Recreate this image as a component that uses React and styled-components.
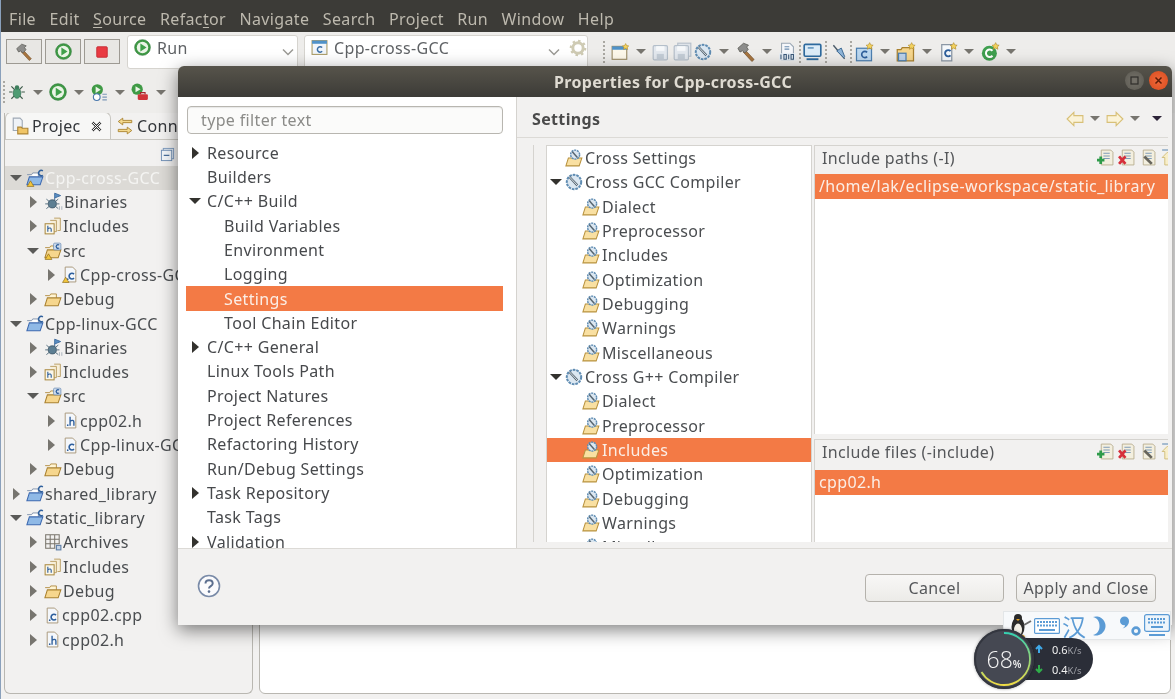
import React from 'react';
import styled, {createGlobalStyle} from 'styled-components';

const GlobalStyle = createGlobalStyle`
    html, body {
        margin: 0;
        padding: 0;
        background: #f2f1f0;
    }
    body {
        font-family: "Noto Sans", "Open Sans", sans-serif;
        font-size: 16px;
        letter-spacing: 0.35px;
        color: #4a4a4a;
    }
    * {
        box-sizing: border-box;
    }
`;

const Screen = styled.div`
    position: relative;
    width: 1175px;
    height: 699px;
    overflow: hidden;
    background: #f2f1f0;
    border-left: 1px solid #8aa0bb;
    display: flex;
    flex-direction: column;
    filter: blur(0.35px);
`;

const MenuBar = styled.nav`
    height: 32px;
    flex: none;
    background: #3c3b37;
    display: flex;
    align-items: flex-end;
    gap: 13.5px;
    padding: 0 0 2px 8px;
    color: #bdb9ae;
    line-height: 22px;
    u { text-underline-offset: 2px; }
`;

const ToolRow = styled.div`
    height: ${(p) => p.$height}px;
    flex: none;
    display: flex;
    align-items: center;
    padding-left: ${(p) => p.$pad}px;
    background: #eeedeb;
`;

const ToolButton = styled.div`
    width: 36px;
    height: 25px;
    margin-right: 3px;
    border: 1px solid #9d9a93;
    background: #e8e7e4;
    display: flex;
    align-items: center;
    justify-content: center;
`;

const Combo = styled.div`
    width: ${(p) => p.$width}px;
    height: 34px;
    margin-left: ${(p) => p.$left}px;
    background: #fff;
    border: 1px solid #d6d4cf;
    border-radius: 3px;
    display: flex;
    align-items: flex-start;
    gap: 6px;
    padding: 3px 0 0 6px;
    color: #5f6265;
`;

const ComboLabel = styled.span`
    flex: 1;
    line-height: 22px;
    margin-top: -2px;
`;

const ToolIcons = styled.div`
    display: flex;
    align-items: center;
    gap: ${(p) => p.$gap ?? 3}px;
    margin-left: ${(p) => p.$left || 0}px;
`;

const Gripper = styled.span`
    width: 2px;
    height: 22px;
    margin: 0 ${(p) => p.$space ?? 4}px;
    background: repeating-linear-gradient(to bottom, #aaa8a2 0 2px, transparent 2px 4px);
`;

const Drop = styled.span`
    width: 0;
    height: 0;
    flex: none;
    margin: 0 ${(p) => p.$space ?? 5}px;
    border-left: 5px solid transparent;
    border-right: 5px solid transparent;
    border-top: 5px solid ${(p) => p.$color || '#77756f'};
`;

const Main = styled.div`
    flex: 1;
    display: flex;
    gap: 6px;
    padding: 0 4px 5px 3px;
    min-height: 0;
`;

const ProjectPanel = styled.section`
    width: 249px;
    flex: none;
    display: flex;
    flex-direction: column;
    border: 1px solid #b9b7b1;
    border-top: none;
    border-radius: 0 0 6px 6px;
    overflow: hidden;
`;

const TabStrip = styled.div`
    height: 27px;
    flex: none;
    display: flex;
    align-items: flex-end;
    border-bottom: 1px solid #c9c7c1;
`;

const Tab = styled.div`
    width: ${(p) => p.$width}px;
    height: 27px;
    flex: none;
    display: flex;
    align-items: center;
    gap: 3px;
    padding-left: 5px;
    color: #33363a;
    background: ${(p) => (p.$active ? '#f7f7f6' : 'transparent')};
    border: ${(p) => (p.$active ? '1px solid #c9c7c1' : 'none')};
    border-bottom: none;
    border-radius: 6px 6px 0 0;
`;

const TabClose = styled.span`
    display: flex;
    margin-left: 6px;
`;

const PanelTools = styled.div`
    height: 25.5px;
    flex: none;
    display: flex;
    align-items: center;
    justify-content: flex-end;
    padding-right: 77px;
    padding-top: 4px;
`;

const TreeRows = styled.div`
    flex: 1;
    min-height: 0;
    overflow: hidden;
`;

const Row = styled.div`
    height: 24.32px;
    flex: none;
    display: flex;
    align-items: center;
    white-space: nowrap;
    overflow: hidden;
    padding-left: ${(p) => p.$indent}px;
    background: ${(p) => p.$bg || 'transparent'};
    color: ${(p) => p.$fg || '#4a4d50'};
`;

const RowLabel = styled.span`
    margin-left: ${(p) => p.$gap || 0}px;
`;

const Twisty = styled.span`
    width: 12px;
    flex: none;
    height: 12px;
    margin-right: ${(p) => p.$gap}px;
    display: inline-flex;
    align-items: center;
    justify-content: center;
    &::before {
        content: '';
        visibility: ${(p) => (p.$kind === 'none' ? 'hidden' : 'visible')};
        border-style: solid;
        border-color: transparent;
        ${(p) => (p.$kind === 'open'
            ? `border-width: 6px 6px 0 6px; border-top-color: ${p.$tone};`
            : `border-width: 6px 0 6px 7px; border-left-color: ${p.$tone};`)}
    }
`;

const EditorPanel = styled.section`
    flex: 1;
    margin-top: 3px;
    background: #fff;
    border: 1px solid #b9b7b1;
    border-radius: 0 0 6px 6px;
`;

const Dialog = styled.section`
    position: absolute;
    left: 177px;
    top: 66px;
    width: 994px;
    height: 559px;
    display: flex;
    flex-direction: column;
    border-radius: 6px 6px 0 0;
    background: #f2f1f0;
    box-shadow: 0 5px 18px rgba(0, 0, 0, 0.5);
    overflow: hidden;
`;

const TitleBar = styled.header`
    height: 31px;
    flex: none;
    position: relative;
    display: flex;
    align-items: center;
    justify-content: center;
    padding-right: 4px;
    background: linear-gradient(#57544b, #3c3b37);
    color: #dfdbd2;
    font-weight: 700;
`;

const WindowButtons = styled.div`
    position: absolute;
    right: 4px;
    top: 5px;
    display: flex;
    gap: 5px;
`;

const WindowButton = styled.span`
    width: 19px;
    height: 19px;
    border-radius: 50%;
    display: flex;
    align-items: center;
    justify-content: center;
    background: ${(p) => (p.$close ? 'radial-gradient(#f0683a, #d84c1e)' : 'radial-gradient(#75726a, #5c5a52)')};
    color: ${(p) => (p.$close ? '#5d1d08' : '#2f2e2a')};
`;

const DialogBody = styled.div`
    flex: 1;
    min-height: 0;
    display: flex;
    border-bottom: 1px solid #dcdad6;
`;

const Sidebar = styled.div`
    width: 339px;
    flex: none;
    background: #fff;
    border-right: 1px solid #d5d3cf;
    display: flex;
    flex-direction: column;
    padding: 9px 13px 0 8px;
    overflow: hidden;
`;

const FilterInput = styled.div`
    height: 28px;
    flex: none;
    margin: 0 0 6.5px 1px;
    border: 1px solid #b8b6b0;
    border-radius: 4px;
    background: #fbfbfa;
    box-shadow: inset 0 1px 1px rgba(0, 0, 0, 0.08);
    padding-left: 13px;
    line-height: 26px;
    color: #8b8b88;
`;

const PagePane = styled.div`
    flex: 1;
    min-width: 0;
    display: flex;
    flex-direction: column;
`;

const PageHeader = styled.div`
    height: 41px;
    flex: none;
    display: flex;
    align-items: center;
    justify-content: space-between;
    padding: 3px 0 0 15px;
    margin-right: 4px;
    border-bottom: 1px solid #dcdad6;
    font-weight: 700;
`;

const NavIcons = styled.div`
    display: flex;
    align-items: center;
`;

const PageContent = styled.div`
    flex: 1;
    min-height: 0;
    display: flex;
    padding: 7px 4px 6px 16px;
`;

const Gutter = styled.div`
    width: 13px;
    flex: none;
    border-left: 1px solid #d5d3cf;
`;

const SettingsTree = styled.div`
    width: 266px;
    flex: none;
    background: #fff;
    border: 1px solid #d5d3cf;
    border-bottom: none;
    overflow: hidden;
`;

const Lists = styled.div`
    flex: 1;
    min-width: 0;
    margin-left: 2px;
    display: flex;
    flex-direction: column;
    gap: 5px;
`;

const ListGroup = styled.div`
    flex: ${(p) => p.$grow};
    min-height: 0;
    display: flex;
    flex-direction: column;
    border-top: 1px solid #d5d3cf;
    border-left: 1px solid #d5d3cf;
`;

const ListHeader = styled.div`
    height: ${(p) => p.$height}px;
    flex: none;
    display: flex;
    align-items: center;
    justify-content: space-between;
    padding: 0 0 ${(p) => p.$height - 23}px 7px;
    color: #55575a;
`;

const ListBody = styled.div`
    flex: 1;
    background: #fff;
`;

const ListItem = styled.div`
    height: 25px;
    padding-left: 4px;
    line-height: 25px;
    background: #f37a45;
    color: #fbeee6;
    white-space: nowrap;
`;

const ListTools = styled.div`
    display: flex;
    align-items: center;
    gap: 4px;
    width: 71px;
    overflow: hidden;
`;

const Footer = styled.footer`
    height: 76px;
    flex: none;
    display: flex;
    align-items: flex-start;
    justify-content: space-between;
    padding: 25px 16px 0 19px;
`;

const FooterButtons = styled.div`
    display: flex;
    gap: 12px;
`;

const Button = styled.button`
    width: ${(p) => p.$width}px;
    height: 28px;
    padding: 0;
    font: inherit;
    letter-spacing: inherit;
    color: #55575a;
    border: 1px solid #b5b2ac;
    border-radius: 4px;
    background: linear-gradient(#f8f7f6, #ecebe8);
`;

const Tray = styled.div`
    position: absolute;
    left: 1002px;
    top: 611px;
    width: 168px;
    height: 29px;
    background: #f7f9fb;
    border: 1px solid #e3e6e8;
    display: flex;
    align-items: center;
    padding-left: 4px;
`;

const TraySlot = styled.span`
    display: flex;
    align-items: center;
    flex: none;
    margin-left: ${(p) => p.$left || 0}px;
`;

const TrayGlyph = styled.span`
    color: #5b9bd5;
    font-family: "Noto Sans CJK SC", sans-serif;
    font-size: 24px;
    line-height: 26px;
    letter-spacing: 0;
`;

const SpeedPill = styled.div`
    position: absolute;
    left: 1002px;
    top: 638px;
    width: 90px;
    height: 42px;
    padding-left: 31px;
    border-radius: 0 21px 21px 0;
    background: #2b2e38;
    display: flex;
    flex-direction: column;
    justify-content: center;
`;

const SpeedLine = styled.div`
    height: 20px;
    display: flex;
    align-items: center;
    gap: 8px;
    font-size: 11px;
    letter-spacing: 0;
    color: #f1f1f1;
    small {
        font-size: 9.5px;
        color: #9a9ca3;
    }
`;

const Gauge = styled.div`
    position: absolute;
    left: 973px;
    top: 629px;
    width: 60px;
    height: 60px;
    border-radius: 50%;
    background: #454852;
    box-shadow: 0 0 3px rgba(0, 0, 0, 0.4);
    display: flex;
    align-items: center;
    justify-content: center;
    color: #f4f4f4;
    font-size: 23px;
    letter-spacing: 0;
    font-family: "Open Sans", sans-serif;
    font-weight: 300;
    small {
        font-size: 10px;
        margin-top: 9px;
        font-weight: 600;
    }
    svg {
        position: absolute;
        inset: 0;
    }
`;

const ChevronSlot = styled.span`
    width: 18px;
    height: 26px;
    flex: none;
    display: flex;
    align-items: center;
    justify-content: center;
`;

const Chevron = () => (
    <ChevronSlot>
        <svg width="12" height="8" viewBox="0 0 12 8">
            <path d="M1 1.500l5 5 5-5" fill="none" stroke="#9b9a95" strokeWidth="1.500" />
        </svg>
    </ChevronSlot>
);

const Svg = ({size = 16, children}) => (
    <svg width={size} height={size} viewBox="0 0 16 16" style={{flex: 'none'}}>{children}</svg>
);

const Hammer = ({size = 18}) => (
    <Svg size={size}>
        <path d="M7.5 6.5l7 7.5-1.8 1.6-7-7.6z" fill="#a8753f" stroke="#6e4a24" strokeWidth=".5" />
        <path d="M1.5 5L6 1l4 1.5L8.5 4 9.8 6 7 8.8 5.2 7 3.2 8z" fill="#8d8d8b" stroke="#55554f" strokeWidth=".6" />
    </Svg>
);

const RunDot = ({size = 17}) => (
    <Svg size={size}>
        <circle cx="8" cy="8" r="7.4" fill="#3f9a45" stroke="#2c7a38" strokeWidth=".6" />
        <circle cx="8" cy="8" r="5.4" fill="#eaf4e6" />
        <path d="M6 4.3L11.8 8 6 11.7z" fill="#3fa04a" />
    </Svg>
);

const StopSquare = () => (
    <Svg size={14}>
        <rect x="2" y="2" width="12" height="12" rx="1" fill="#e93a42" stroke="#c22a32" />
    </Svg>
);

const ConfigC = () => (
    <Svg size={17}>
        <rect x="1" y="1.5" width="14" height="13" fill="#f1f6fb" stroke="#a99a63" />
        <rect x="1" y="1.5" width="14" height="3" fill="#4f92c9" />
        <path d="M10.5 8a2.6 2.6 0 1 0 0 3.6" fill="none" stroke="#3a6ea5" strokeWidth="1.4" />
    </Svg>
);

const Gear = () => (
    <Svg size={18}>
        <circle cx="8" cy="8" r="4.6" fill="none" stroke="#cfcbb4" strokeWidth="2.6" />
        <circle cx="8" cy="8" r="6.4" fill="none" stroke="#cfcbb4" strokeWidth="2" strokeDasharray="2.2 2.8" />
    </Svg>
);

const Bug = () => (
    <Svg size={18}>
        <path d="M3 3l3 3M13 3l-3 3M1 8h3M15 8h-3M3 14l3-3M13 14l-3-3" stroke="#3e5c4a" strokeWidth="1" />
        <ellipse cx="8" cy="9" rx="3.4" ry="4.6" fill="#4f9c73" stroke="#2f6a4f" strokeWidth=".6" />
        <circle cx="8" cy="4" r="2" fill="#3d7e5c" />
    </Svg>
);

const RunHistory = () => (
    <Svg size={18}>
        <circle cx="6.5" cy="6" r="5" fill="#3f9a45" />
        <path d="M5 3.2L9.5 6 5 8.8z" fill="#eaf4e6" />
        <circle cx="6" cy="12.5" r="3" fill="#fff" stroke="#4a78ad" />
        <path d="M11 10h4M11 12.5h4M11 15h4" stroke="#7c98b8" />
    </Svg>
);

const RunTool = () => (
    <Svg size={18}>
        <circle cx="5.5" cy="5.5" r="5" fill="#3f9a45" />
        <path d="M4 2.8L8.5 5.5 4 8.2z" fill="#eaf4e6" />
        <rect x="6" y="10" width="9" height="5" rx="1" fill="#d0343a" />
        <path d="M8.5 10V8.5h4V10" fill="none" stroke="#a3262b" />
    </Svg>
);

const CollapseAll = () => (
    <Svg size={15}>
        <rect x="3.5" y="1.5" width="11" height="11" fill="#e6edf5" stroke="#7f9cbf" />
        <rect x="1.5" y="3.5" width="11" height="11" fill="#f2f6fa" stroke="#6f8fb5" />
        <path d="M4 9h6" stroke="#4a6f9c" strokeWidth="1.4" />
    </Svg>
);

const ProjectTabIcon = () => (
    <Svg size={18}>
        <path d="M2 1h6l2 2v9H2z" fill="#eef2f7" stroke="#9fa9b5" />
        <path d="M6 9h3l1 1h5v5H6z" fill="#f0c566" stroke="#ad8536" />
    </Svg>
);

const ConnTabIcon = () => (
    <Svg size={18}>
        <path d="M6 1L2 4l4 3V5h8V3H6zM10 9l4 3-4 3v-2H2v-2h8z" fill="#f3d98f" stroke="#a9822f" strokeWidth=".8" />
    </Svg>
);

const CloseMark = () => (
    <Svg size={13}>
        <path d="M3 3l10 10M13 3L3 13" stroke="#333" strokeWidth="3" />
        <path d="M3 3l10 10M13 3L3 13" stroke="#fff" strokeWidth="1.2" />
    </Svg>
);

const FolderShape = () => (
    <>
        <path d="M1 5h4l1-1.5h5V7" fill="#fff4d2" stroke="#b08a3e" strokeWidth=".8" />
        <path d="M.8 14L3 7h12l-2.4 7z" fill="#f6d68d" stroke="#a9812f" strokeWidth=".9" />
    </>
);

const Folder = () => (
    <Svg size={18}>
        <FolderShape />
    </Svg>
);

const ProjectFolder = ({warn}) => (
    <Svg size={18}>
        <path d="M1 5h4l1-1.5h5V7" fill="#fff" stroke="#7a8da8" strokeWidth=".8" />
        <path d="M.8 14L3 7h12l-2.4 7z" fill="#8fb9e6" stroke="#3d69b0" strokeWidth=".9" />
        <path d="M15 1.6a2.4 2.4 0 1 0 0 4" fill="none" stroke="#2e5f9c" strokeWidth="1.4" />
        {warn && <path d="M1 15.5l3-5 3 5z" fill="#f2c53d" stroke="#8a6a18" strokeWidth=".6" />}
    </Svg>
);

const SourceFolder = ({warn}) => (
    <Svg size={18}>
        <FolderShape />
        <rect x="8.5" y="1" width="6.5" height="6" rx="1" fill="#cfdcec" stroke="#6e8fb8" strokeWidth=".7" />
        <path d="M13.5 2.8a1.6 1.6 0 1 0 0 2.4" fill="none" stroke="#2e5f9c" strokeWidth="1.1" />
        {warn && <path d="M1 15.5l3-5 3 5z" fill="#f2c53d" stroke="#8a6a18" strokeWidth=".6" />}
    </Svg>
);

const BinaryIcon = () => (
    <Svg size={19}>
        <path d="M9 1v6M9 1l5 2-5 2" fill="#5b8fc4" stroke="#3f6d9e" strokeWidth=".8" />
        <circle cx="7" cy="10" r="3.4" fill="#5d7f93" stroke="#3b5566" strokeWidth=".7" />
        <path d="M2 6l2.5 2M2 14l2.5-2M12 6L9.5 8M12 14l-2.5-2M1 10h2.5M13 10h-2.5" stroke="#556f80" strokeWidth=".8" />
        <path d="M13 12v3M15 12v3" stroke="#a9b3bd" strokeWidth=".8" />
    </Svg>
);

const IncludesIcon = () => (
    <Svg size={18}>
        <path d="M9 1h5.5v11H12" fill="#f7efd9" stroke="#b79a5c" strokeWidth=".8" />
        <path d="M5.5 3H11v10H9" fill="#f7efd9" stroke="#b79a5c" strokeWidth=".8" />
        <rect x="1" y="6" width="8" height="9" fill="#fbf7ea" stroke="#a9883e" strokeWidth=".9" />
        <path d="M3.4 7.8v5.4M3.4 10.5c1.8-1.4 3-.6 3 .7v2" fill="none" stroke="#2e5f9c" strokeWidth="1" />
    </Svg>
);

const SourceFile = ({kind = 'c', warn}) => (
    <Svg size={17}>
        <path d="M3 1h7l3 3v11H3z" fill="#f4f7fb" stroke="#a9977a" strokeWidth=".9" />
        <circle cx="5.4" cy="12.4" r=".8" fill="#2e5f9c" />
        {kind === 'c'
            ? <path d="M11.3 7.6a2.7 2.7 0 1 0 0 3.8" fill="none" stroke="#2e5f9c" strokeWidth="1.5" />
            : <path d="M7.6 4.5v8.5M7.6 8.8c2-1.7 3.6-.9 3.6.8V13" fill="none" stroke="#2e5f9c" strokeWidth="1.3" />}
        {warn && <path d="M.5 15.5l3-5 3 5z" fill="#f2c53d" stroke="#8a6a18" strokeWidth=".6" />}
    </Svg>
);

const ArchiveIcon = () => (
    <Svg size={18}>
        <path d="M1 1.5h13M1 5.5h13M1 9.5h13M1 13.5h9M1.5 1v13M5.5 1v13M9.5 1v13M13.5 1v9" stroke="#77736a" strokeWidth=".9" />
        <rect x="11" y="11" width="4" height="4" fill="#c7d5e6" stroke="#5f7fa6" />
    </Svg>
);

const Wheel = ({size = 18}) => (
    <Svg size={size}>
        <circle cx="8" cy="8" r="6.4" fill="#dbe7f1" stroke="#5f8cb2" strokeWidth="1.8" strokeDasharray="2.4 .8" />
        <path d="M4 3.5L11 11" stroke="#55646f" strokeWidth="2" />
        <path d="M4 3.5L11 11" stroke="#e5edf3" strokeWidth=".8" />
    </Svg>
);

const ToolFolder = () => (
    <Svg size={18}>
        <path d="M.8 15L3 8h12l-2.400 7z" fill="#f9e0a2" stroke="#b8923f" strokeWidth=".9" />
        <circle cx="9" cy="5" r="4" fill="#dbe7f1" stroke="#5f8cb2" strokeWidth="1.3" strokeDasharray="1.8 .7" />
        <path d="M6.500 2.500L11 7.500" stroke="#55646f" strokeWidth="1.300" />
    </Svg>
);

const NewWindow = () => (
    <Svg size={18}>
        <rect x="1" y="3" width="13" height="11.5" fill="#fdf8ea" stroke="#9c8d66" />
        <rect x="1" y="3" width="13" height="3" fill="#4f92c9" />
        <path d="M13 .5l.9 1.8 1.9.3-1.4 1.3.4 1.9-1.8-1-1.8 1 .4-1.9-1.4-1.3 1.9-.3z" fill="#f4d35e" stroke="#b08a25" strokeWidth=".5" />
    </Svg>
);

const SaveDisk = ({ghost}) => (
    <Svg size={19}>
        {ghost && <rect x="4" y="1" width="11" height="11" fill="#dfe4ea" stroke="#b8c1cb" />}
        <rect x="1" y="3" width="12" height="12" rx="1" fill="#e3e8ee" stroke="#b4bfca" />
        <rect x="3.5" y="3.5" width="7" height="4" fill="#f6f8fa" />
        <rect x="4" y="10" width="6" height="5" fill="#c3ccd6" />
    </Svg>
);

const BinaryFile = () => (
    <Svg size={19}>
        <path d="M3 1h7l3 3v11H3z" fill="#f5f7fa" stroke="#9aa7b4" strokeWidth=".9" />
        <rect x="1" y="9.5" width="14" height="6" fill="#e6edf4" />
        <path d="M2.5 10.5v4M5 10.5h2v4H5zM9 10.5v4M11 10.5h2v4h-2z" fill="none" stroke="#3a5878" strokeWidth=".9" />
        <path d="M5.5 4h4M5.5 6h4" stroke="#6a8cae" />
    </Svg>
);

const Monitor = () => (
    <Svg size={19}>
        <rect x="1" y="2" width="14" height="10" rx="1" fill="#dcecf8" stroke="#2e6a9e" strokeWidth="1.4" />
        <path d="M4 5h5" stroke="#3a78aa" />
        <path d="M3 14.5h10" stroke="#2e6a9e" strokeWidth="1.6" />
    </Svg>
);

const Pin = () => (
    <Svg size={18}>
        <path d="M3 2l10 12" stroke="#4b5a68" strokeWidth="1.2" />
        <path d="M6 7l4-2.5 3 7.5-1 1z" fill="#8fb5d8" stroke="#36638e" strokeWidth=".8" />
    </Svg>
);

const NewFolderC = ({tone}) => (
    <Svg size={20}>
        <rect x="2" y="5" width="12" height="10" fill={tone} stroke="#4d7fb0" />
        <path d="M10.5 8.3a2.5 2.5 0 1 0 0 3.4" fill="none" stroke="#2e5f9c" strokeWidth="1.3" />
        <path d="M12.5 .5l.9 1.8 1.9.3-1.4 1.3.4 1.9-1.8-1-1.8 1 .4-1.9-1.4-1.3 1.9-.3z" fill="#f4d35e" stroke="#b08a25" strokeWidth=".5" />
    </Svg>
);

const NewFolderYellow = () => (
    <Svg size={20}>
        <path d="M1 15V6h3l1-1.5h9V15z" fill="#f6d68d" stroke="#a9812f" />
        <rect x="2" y="9" width="6" height="6" fill="#bcd2ea" stroke="#4d7fb0" />
        <path d="M12.5 .5l.9 1.8 1.9.3-1.4 1.3.4 1.9-1.8-1-1.8 1 .4-1.9-1.4-1.3 1.9-.3z" fill="#f4d35e" stroke="#b08a25" strokeWidth=".5" />
    </Svg>
);

const NewFile = () => (
    <Svg size={20}>
        <path d="M3 2h8v13H3z" fill="#f5f8fb" stroke="#8b97a5" />
        <path d="M10 7.3a2.5 2.5 0 1 0 0 3.4" fill="none" stroke="#2e5f9c" strokeWidth="1.5" />
        <path d="M12.5 .5l.9 1.8 1.9.3-1.4 1.3.4 1.9-1.8-1-1.8 1 .4-1.9-1.4-1.3 1.9-.3z" fill="#f4d35e" stroke="#b08a25" strokeWidth=".5" />
    </Svg>
);

const NewClass = () => (
    <Svg size={20}>
        <circle cx="7.5" cy="9" r="6" fill="#3f9f4f" />
        <path d="M10 7a3 3 0 1 0 0 4" fill="none" stroke="#fff" strokeWidth="1.6" />
        <path d="M12.5 .5l.9 1.8 1.9.3-1.4 1.3.4 1.9-1.8-1-1.8 1 .4-1.9-1.4-1.3 1.9-.3z" fill="#f4d35e" stroke="#b08a25" strokeWidth=".5" />
    </Svg>
);

const NavArrow = ({left}) => (
    <Svg size={18}>
        <path
            d={left ? 'M1 8l6-6v3h8v6H7v3z' : 'M15 8L9 2v3H1v6h8v3z'}
            fill="#fbf3d8"
            stroke="#d8c078"
        />
    </Svg>
);

const HelpIcon = () => (
    <svg width="24" height="24" viewBox="0 0 24 24">
        <circle cx="12" cy="12" r="10.5" fill="#fbfbfd" stroke="#7a8ba8" strokeWidth="1.6" />
        <path d="M8.5 9.5c0-4.4 7.2-4.4 7.2 0 0 2.7-3.7 2.6-3.7 5" fill="none" stroke="#5c6f8f" strokeWidth="2" />
        <circle cx="12" cy="17.6" r="1.3" fill="#5c6f8f" />
    </svg>
);

const PageAction = ({mark}) => (
    <Svg size={17}>
        <path d="M4 1h9l2 2v12H4z" fill="#f3efdf" stroke="#b3a98a" strokeWidth=".8" />
        <path d="M6 4h6M6 6.5h6M6 9h6" stroke="#7f9bb8" />
        {mark === 'add' && <path d="M3.5 7v7M0 10.5h7" stroke="#2f9b4a" strokeWidth="2.6" />}
        {mark === 'del' && <path d="M1 7l6 7M7 7l-6 7" stroke="#d62f3a" strokeWidth="2.6" />}
        {mark === 'edit' && <path d="M5 7l7 7" stroke="#67655c" strokeWidth="2.6" />}
    </Svg>
);

const UpArrowAction = () => (
    <Svg size={17}>
        <path d="M2 1h10" stroke="#8ba9c6" strokeWidth="1.4" />
        <path d="M7 3l5 5H9.5v7h-5V8H2z" fill="#f8eec9" stroke="#cdb873" strokeWidth=".8" />
    </Svg>
);

const Penguin = () => (
    <svg width="24" height="28" viewBox="0 0 24 28">
        <ellipse cx="10" cy="15" rx="6.500" ry="10" fill="#2b2b2b" />
        <ellipse cx="10" cy="18" rx="4" ry="6.500" fill="#f2efe6" />
        <circle cx="10" cy="6" r="4" fill="#2b2b2b" />
        <path d="M8 7h4l-2 2z" fill="#e6a324" />
        <path d="M3 25c2-3 5-3 6 0zM11 25c2-3 5-3 6 0z" fill="#e6a324" />
        <path d="M16 13l7-4" stroke="#6a6a6a" strokeWidth="2" />
    </svg>
);

const KeyboardFlat = () => (
    <svg width="26" height="16" viewBox="0 0 26 16">
        <rect x=".6" y=".6" width="24.8" height="14.8" rx="1" fill="#fff" stroke="#5b9bd5" strokeWidth="1.2" />
        <path d="M3 4h20M3 7.5h20" stroke="#5b9bd5" strokeWidth="2" strokeDasharray="2 1" />
        <path d="M5 12h16" stroke="#5b9bd5" strokeWidth="2" />
    </svg>
);

const Moon = () => (
    <svg width="22" height="22" viewBox="0 0 22 22">
        <path d="M2 2a9.500 9.500 0 1 1 0 18c4.500-1 6.500-4.500 6.500-9S6.500 3 2 2z" fill="#5b9bd5" />
    </svg>
);

const PunctDots = () => (
    <svg width="24" height="22" viewBox="0 0 24 22">
        <path d="M2 6a4.500 4.500 0 1 1 9 0c0 4-3 6.500-6.500 7.500C6.500 12 7 11 7 10.200 4 10.500 2 8.500 2 6z" fill="#5b9bd5" />
        <circle cx="18" cy="16" r="3.400" fill="none" stroke="#5b9bd5" strokeWidth="2.600" />
    </svg>
);

const KeyboardStand = () => (
    <svg width="26" height="23" viewBox="0 0 26 23">
        <rect x=".6" y=".6" width="24.800" height="16.800" rx="2" fill="#eef5fb" stroke="#5b9bd5" strokeWidth="1.200" />
        <path d="M4 5h18M4 8.500h18" stroke="#5b9bd5" strokeWidth="2" strokeDasharray="2 1" />
        <path d="M7 13h12M5 21h16" stroke="#5b9bd5" strokeWidth="2" />
    </svg>
);

const GaugeRing = () => (
    <svg width="60" height="60" viewBox="0 0 60 60">
        <defs>
            <linearGradient id="ringTone" x1="0" y1="0" x2="0" y2="1">
                <stop offset="0" stopColor="#35d0b0" />
                <stop offset="1" stopColor="#f0dc45" />
            </linearGradient>
        </defs>
        <circle cx="30" cy="30" r="29" fill="none" stroke="#33363f" strokeWidth="2" />
        <path d="M30 4a26 26 0 0 1 0 52A26 26 0 0 1 7.500 43" fill="none" stroke="url(#ringTone)" strokeWidth="1.800" />
    </svg>
);

const Arrow = ({color, up}) => (
    <svg width="10" height="10" viewBox="0 0 10 10">
        <path d={up ? 'M5 9V3M2 5l3-3 3 3' : 'M5 1v6M2 5l3 3 3-3'} fill="none" stroke={color} strokeWidth="2" />
    </svg>
);

const iconFor = {
    project: <ProjectFolder />,
    projectWarn: <ProjectFolder warn />,
    binary: <BinaryIcon />,
    includes: <IncludesIcon />,
    src: <SourceFolder />,
    srcWarn: <SourceFolder warn />,
    fileC: <SourceFile />,
    fileCWarn: <SourceFile warn />,
    fileH: <SourceFile kind="h" />,
    folder: <Folder />,
    archive: <ArchiveIcon />,
    wheel: <Wheel />,
    tool: <ToolFolder />,
};

const projectTree = [
    {d: 0, t: 'open', i: 'projectWarn', label: 'Cpp-cross-GCC', selected: true},
    {d: 1, t: 'closed', i: 'binary', label: 'Binaries'},
    {d: 1, t: 'closed', i: 'includes', label: 'Includes'},
    {d: 1, t: 'open', i: 'srcWarn', label: 'src'},
    {d: 2, t: 'closed', i: 'fileCWarn', label: 'Cpp-cross-GCC.c'},
    {d: 1, t: 'closed', i: 'folder', label: 'Debug'},
    {d: 0, t: 'open', i: 'project', label: 'Cpp-linux-GCC'},
    {d: 1, t: 'closed', i: 'binary', label: 'Binaries'},
    {d: 1, t: 'closed', i: 'includes', label: 'Includes'},
    {d: 1, t: 'open', i: 'src', label: 'src'},
    {d: 2, t: 'closed', i: 'fileH', label: 'cpp02.h'},
    {d: 2, t: 'closed', i: 'fileC', label: 'Cpp-linux-GCC.c'},
    {d: 1, t: 'closed', i: 'folder', label: 'Debug'},
    {d: 0, t: 'closed', i: 'project', label: 'shared_library'},
    {d: 0, t: 'open', i: 'project', label: 'static_library'},
    {d: 1, t: 'closed', i: 'archive', label: 'Archives'},
    {d: 1, t: 'closed', i: 'includes', label: 'Includes'},
    {d: 1, t: 'closed', i: 'folder', label: 'Debug'},
    {d: 1, t: 'closed', i: 'fileC', label: 'cpp02.cpp'},
    {d: 1, t: 'closed', i: 'fileH', label: 'cpp02.h'},
];

const propertyPages = [
    {d: 0, t: 'closed', label: 'Resource'},
    {d: 0, t: 'none', label: 'Builders'},
    {d: 0, t: 'open', label: 'C/C++ Build'},
    {d: 1, t: 'none', label: 'Build Variables'},
    {d: 1, t: 'none', label: 'Environment'},
    {d: 1, t: 'none', label: 'Logging'},
    {d: 1, t: 'none', label: 'Settings', selected: true},
    {d: 1, t: 'none', label: 'Tool Chain Editor'},
    {d: 0, t: 'closed', label: 'C/C++ General'},
    {d: 0, t: 'none', label: 'Linux Tools Path'},
    {d: 0, t: 'none', label: 'Project Natures'},
    {d: 0, t: 'none', label: 'Project References'},
    {d: 0, t: 'none', label: 'Refactoring History'},
    {d: 0, t: 'none', label: 'Run/Debug Settings'},
    {d: 0, t: 'closed', label: 'Task Repository'},
    {d: 0, t: 'none', label: 'Task Tags'},
    {d: 0, t: 'closed', label: 'Validation'},
];

const settingsTree = [
    {d: 0, t: 'none', i: 'tool', label: 'Cross Settings'},
    {d: 0, t: 'open', i: 'wheel', label: 'Cross GCC Compiler'},
    {d: 1, i: 'tool', label: 'Dialect'},
    {d: 1, i: 'tool', label: 'Preprocessor'},
    {d: 1, i: 'tool', label: 'Includes'},
    {d: 1, i: 'tool', label: 'Optimization'},
    {d: 1, i: 'tool', label: 'Debugging'},
    {d: 1, i: 'tool', label: 'Warnings'},
    {d: 1, i: 'tool', label: 'Miscellaneous'},
    {d: 0, t: 'open', i: 'wheel', label: 'Cross G++ Compiler'},
    {d: 1, i: 'tool', label: 'Dialect'},
    {d: 1, i: 'tool', label: 'Preprocessor'},
    {d: 1, i: 'tool', label: 'Includes', selected: true},
    {d: 1, i: 'tool', label: 'Optimization'},
    {d: 1, i: 'tool', label: 'Debugging'},
    {d: 1, i: 'tool', label: 'Warnings'},
    {d: 1, i: 'tool', label: 'Miscellaneous'},
];

const menus = ['File', 'Edit', <><u>S</u>ource</>, <>Refac<u>t</u>or</>, 'Navigate', 'Search', 'Project', 'Run', 'Window', 'Help'];

function ListActions() {
    return (
        <ListTools>
            <PageAction mark="add" />
            <PageAction mark="del" />
            <PageAction mark="edit" />
            <UpArrowAction />
        </ListTools>
    );
}

export default function App() {
    return (
        <Screen>
            <GlobalStyle />
            <MenuBar>
                {menus.map((menu, index) => <span key={index}>{menu}</span>)}
            </MenuBar>
            <ToolRow $height={39} $pad={5}>
                <ToolButton><Hammer /></ToolButton>
                <ToolButton><RunDot /></ToolButton>
                <ToolButton><StopSquare /></ToolButton>
                <Combo $width={171} $left={4}>
                    <RunDot />
                    <ComboLabel>Run</ComboLabel>
                    <Chevron />
                </Combo>
                <Combo $width={284} $left={6}>
                    <ConfigC />
                    <ComboLabel>Cpp-cross-GCC</ComboLabel>
                    <Chevron />
                    <Gear />
                </Combo>
                <ToolIcons $left={11} $gap={2}>
                    <Gripper />
                    <NewWindow />
                    <Drop $space={4.5} />
                    <SaveDisk />
                    <SaveDisk ghost />
                    <Wheel />
                    <Drop $space={5} />
                    <Hammer size={20} />
                    <Drop $space={4} />
                    <BinaryFile />
                    <Gripper $space={0} />
                    <Monitor />
                    <Gripper $space={1} />
                    <Pin />
                    <Gripper $space={0} />
                    <NewFolderC tone="#bcd8f0" />
                    <Drop $space={4} />
                    <NewFolderYellow />
                    <Drop $space={4} />
                    <NewFile />
                    <Drop $space={4} />
                    <NewClass />
                    <Drop $space={4} />
                </ToolIcons>
            </ToolRow>
            <ToolRow $height={42} $pad={1}>
                <Gripper $space={1} />
                <ToolIcons $gap={1} $left={2}>
                    <Bug />
                    <Drop $space={5.5} />
                    <RunDot size={18} />
                    <Drop $space={5.5} />
                    <RunHistory />
                    <Drop $space={5.5} />
                    <RunTool />
                    <Drop $space={5.5} />
                </ToolIcons>
            </ToolRow>
            <Main>
                <ProjectPanel>
                    <TabStrip>
                        <Tab $active $width={106}>
                            <ProjectTabIcon />
                            <span>Projec</span>
                            <TabClose><CloseMark /></TabClose>
                        </Tab>
                        <Tab $width={70}>
                            <ConnTabIcon />
                            <span>Conn</span>
                        </Tab>
                    </TabStrip>
                    <PanelTools><CollapseAll /></PanelTools>
                    <TreeRows>
                        {projectTree.map((row, index) => (
                            <Row
                                key={index}
                                $indent={row.d === 0 ? 5 : row.d === 1 ? 22 : 40}
                                $bg={row.selected ? '#dcdad6' : null}
                                $fg={row.selected ? '#f4f4f2' : null}
                            >
                                <Twisty $kind={row.t} $tone={row.t === 'open' ? '#5a5a58' : '#77756f'} $gap={row.d === 0 ? 4 : 5} />
                                {iconFor[row.i]}
                                <RowLabel $gap={1}>{row.label}</RowLabel>
                            </Row>
                        ))}
                    </TreeRows>
                </ProjectPanel>
                <EditorPanel />
            </Main>
            <Dialog>
                <TitleBar>
                    Properties for Cpp-cross-GCC
                    <WindowButtons>
                        <WindowButton>
                            <svg width="9" height="9" viewBox="0 0 9 9"><rect x="1" y="1" width="7" height="7" fill="none" stroke="currentColor" strokeWidth="1.2" /></svg>
                        </WindowButton>
                        <WindowButton $close>
                            <svg width="9" height="9" viewBox="0 0 9 9"><path d="M1.500 1.500l6 6M7.500 1.500l-6 6" stroke="currentColor" strokeWidth="1.500" /></svg>
                        </WindowButton>
                    </WindowButtons>
                </TitleBar>
                <DialogBody>
                    <Sidebar>
                        <FilterInput>type filter text</FilterInput>
                        {propertyPages.map((page) => (
                            <Row
                                key={page.label}
                                $indent={page.d === 0 ? 3 : 20}
                                $bg={page.selected ? '#f37a45' : null}
                                $fg={page.selected ? '#fbeee6' : '#47494c'}
                            >
                                <Twisty $kind={page.t} $tone="#33322e" $gap={6} />
                                <span>{page.label}</span>
                            </Row>
                        ))}
                    </Sidebar>
                    <PagePane>
                        <PageHeader>
                            <span>Settings</span>
                            <NavIcons>
                                <NavArrow left />
                                <Drop $space={6} />
                                <NavArrow />
                                <Drop $space={6} />
                                <Drop $space={6} $color="#2d2438" />
                            </NavIcons>
                        </PageHeader>
                        <PageContent>
                            <Gutter />
                            <SettingsTree>
                                {settingsTree.map((row, index) => (
                                    <Row
                                        key={index}
                                        $indent={row.d === 0 ? 3 : 35}
                                        $bg={row.selected ? '#f37a45' : null}
                                        $fg={row.selected ? '#fbeee6' : '#4a4d50'}
                                    >
                                        {row.d === 0 && <Twisty $kind={row.t} $tone="#33322e" $gap={3} />}
                                        {iconFor[row.i]}
                                        <RowLabel $gap={2}>{row.label}</RowLabel>
                                    </Row>
                                ))}
                            </SettingsTree>
                            <Lists>
                                <ListGroup $grow="0 0 289px">
                                    <ListHeader $height={28}>
                                        <span>Include paths (-I)</span>
                                        <ListActions />
                                    </ListHeader>
                                    <ListBody>
                                        <ListItem>/home/lak/eclipse-workspace/static_library</ListItem>
                                    </ListBody>
                                </ListGroup>
                                <ListGroup $grow="1">
                                    <ListHeader $height={30}>
                                        <span>Include files (-include)</span>
                                        <ListActions />
                                    </ListHeader>
                                    <ListBody>
                                        <ListItem>cpp02.h</ListItem>
                                    </ListBody>
                                </ListGroup>
                            </Lists>
                        </PageContent>
                    </PagePane>
                </DialogBody>
                <Footer>
                    <HelpIcon />
                    <FooterButtons>
                        <Button $width={139}>Cancel</Button>
                        <Button $width={140}>Apply and Close</Button>
                    </FooterButtons>
                </Footer>
            </Dialog>
            <Tray>
                <TraySlot><Penguin /></TraySlot>
                <TraySlot $left={2}><KeyboardFlat /></TraySlot>
                <TraySlot $left={2}><TrayGlyph>汉</TrayGlyph></TraySlot>
                <TraySlot $left={5}><Moon /></TraySlot>
                <TraySlot $left={5}><PunctDots /></TraySlot>
                <TraySlot $left={2}><KeyboardStand /></TraySlot>
            </Tray>
            <SpeedPill>
                <SpeedLine><Arrow color="#3fa9e8" up /><span>0.6<small>K/s</small></span></SpeedLine>
                <SpeedLine><Arrow color="#2fae4a" /><span>0.4<small>K/s</small></span></SpeedLine>
            </SpeedPill>
            <Gauge>
                <GaugeRing />
                68<small>%</small>
            </Gauge>
        </Screen>
    );
}
